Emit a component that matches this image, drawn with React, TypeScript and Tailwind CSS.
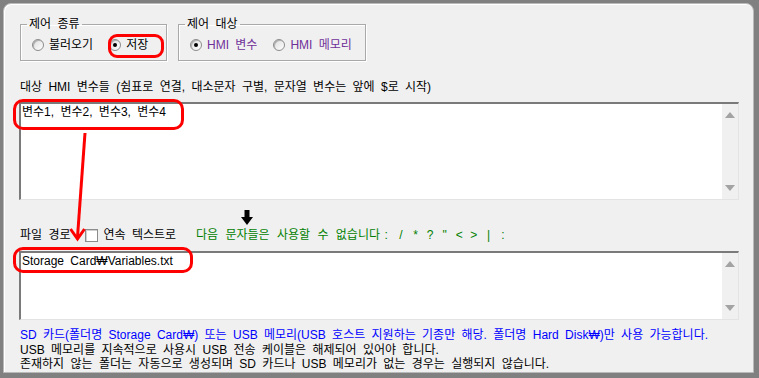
import type { ReactNode } from 'react'

const FONT = "font-['Liberation_Sans','Noto_Sans_CJK_KR',sans-serif]"

function Radio({ checked, label, tone = 'text-black' }: { checked?: boolean; label: string; tone?: string }) {
  return (
    <span className="flex items-center gap-[5px]">
      <span className="flex h-[12px] w-[12px] items-center justify-center rounded-full border border-[#8c8c8c] bg-gradient-to-br from-[#dcdcdc] to-white shadow-[inset_1px_1px_0_#b0b0b0]">
        {checked && <span className="h-[4px] w-[4px] rounded-full bg-black" />}
      </span>
      <span className={tone}>{label}</span>
    </span>
  )
}

function GroupBox({ title, width, children }: { title: string; width: string; children: ReactNode }) {
  return (
    <fieldset className={`${width} h-[44px] border border-[#a9a9a9] shadow-[inset_1px_1px_0_#fff,1px_1px_0_#fff]`}>
      <legend className="ml-[6px] px-[2px] leading-[14px]">{title}</legend>
      <div className="flex h-[28px] items-center gap-[16px] pl-[11px]">{children}</div>
    </fieldset>
  )
}

function ScrollRail() {
  return (
    <div className="flex w-[16px] flex-col items-center justify-between bg-[#f0f0f0] py-[8px]">
      <span className="h-0 w-0 border-x-[5px] border-b-[6px] border-x-transparent border-b-[#a3a3a3]" />
      <span className="h-0 w-0 border-x-[5px] border-t-[6px] border-x-transparent border-t-[#a3a3a3]" />
    </div>
  )
}

function TextBox({ height, value }: { height: string; value: string }) {
  return (
    <div className={`${height} -ml-px flex w-[720px] border-l-2 border-t-2 border-b border-r border-l-[#7a7a7a] border-t-[#7a7a7a] border-b-[#e3e3e3] border-r-[#e3e3e3] bg-white`}>
      <div className="flex-1 pl-[1px] pt-[1px] leading-[14px]">{value}</div>
      <ScrollRail />
    </div>
  )
}

const BANNED = [':', '/', '*', '?', '"', '<', '>', '|', ':']

export default function App() {
  return (
    <div className={`relative h-[378px] w-[759px] overflow-hidden bg-[#808080] pl-[3px] pt-[3px] text-[12px] text-black [word-spacing:3px] ${FONT}`}>
      <div className="h-[370px] w-[751px] rounded-t-[8px] border border-[#b9b9b9] bg-[#f0f0f0] pl-[16px] pt-[13px] shadow-[inset_1px_1px_0_#fff]">
        <div className="flex gap-[11px]">
          <GroupBox title="제어 종류" width="w-[147px]">
            <Radio label="불러오기" />
            <Radio label="저장" checked />
          </GroupBox>
          <GroupBox title="제어 대상" width="w-[188px]">
            <Radio label="HMI 변수" checked tone="text-[#70309a]" />
            <Radio label="HMI 메모리" tone="text-[#70309a]" />
          </GroupBox>
        </div>

        <div className="mt-[19px] leading-[14px]">대상 HMI 변수들 (쉼표로 연결, 대소문자 구별, 문자열 변수는 앞에 $로 시작)</div>
        <div className="mt-[8px]">
          <TextBox height="h-[98px]" value="변수1, 변수2, 변수3, 변수4" />
        </div>

        <div className="flex h-[28px] items-end pb-[3px] pl-[221px]">
          <svg width="12" height="15" viewBox="0 0 12 15">
            <rect x="3.5" y="0" width="5" height="8" fill="#000" />
            <polygon points="0,7 12,7 6,15" fill="#000" />
          </svg>
        </div>

        <div className="flex h-[14px] items-center leading-[14px]">
          <span>파일 경로</span>
          <span className="ml-[14px] h-[13px] w-[13px] border border-[#8c8c8c] bg-white shadow-[inset_1px_1px_0_#d0d0d0]" />
          <span className="ml-[6px]">연속 텍스트로</span>
          <span className="ml-[20px] flex items-center text-[#008000] [word-spacing:4px]">
            <span>다음 문자들은 사용할 수 없습니다</span>
            <span className="-ml-px flex">
              {BANNED.map((ch, i) => (
                <span key={i} className="w-[14.6px] text-center">
                  {ch}
                </span>
              ))}
            </span>
          </span>
        </div>

        <div className="mt-[9px]">
          <TextBox height="h-[69px]" value="Storage Card₩Variables.txt" />
        </div>

        <div className="mt-[8px] leading-[14.5px]">
          <div className="text-[#0000ff]">SD 카드(폴더명 Storage Card₩) 또는 USB 메모리(USB 호스트 지원하는 기종만 해당. 폴더명 Hard Disk₩)만 사용 가능합니다.</div>
          <div>USB 메모리를 지속적으로 사용시 USB 전송 케이블은 해제되어 있어야 합니다.</div>
          <div>존재하지 않는 폴더는 자동으로 생성되며 SD 카드나 USB 메모리가 없는 경우는 실행되지 않습니다.</div>
        </div>
      </div>

      {/* red annotations */}
      <div className="absolute left-[108px] top-[34px] h-[24px] w-[56px] rounded-[9px] border-[3px] border-[#ff0000]" />
      <div className="absolute left-[13px] top-[99px] h-[31px] w-[171px] rounded-[10px] border-[3px] border-[#ff0000]" />
      <div className="absolute left-[13px] top-[247px] h-[26px] w-[180px] rounded-[10px] border-[3px] border-[#ff0000]" />
      <svg className="absolute left-0 top-0" width="759" height="378" viewBox="0 0 759 378" fill="none">
        <path d="M85 133 L77.5 237" stroke="#ff0000" strokeWidth="3" />
        <path d="M70.5 229 L77.5 239 L84.5 229" stroke="#ff0000" strokeWidth="3" />
      </svg>
    </div>
  )
}
